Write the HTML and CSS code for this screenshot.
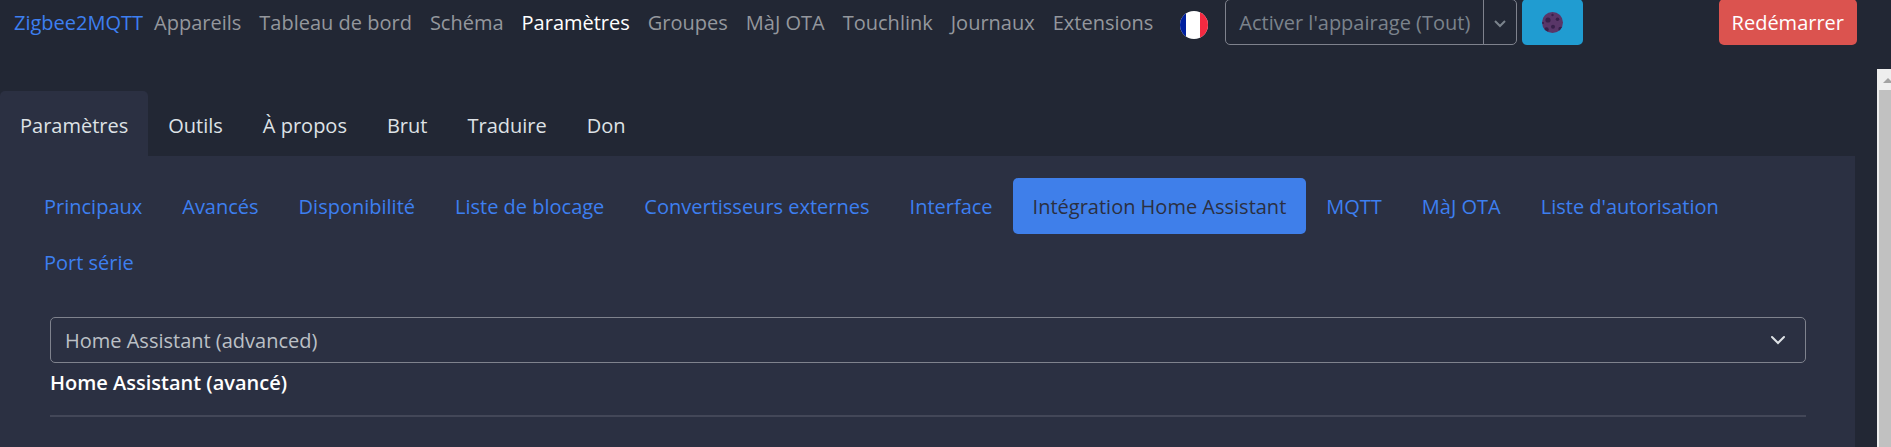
FILE: index.html
```html
<!DOCTYPE html>
<html lang="fr">
<head>
    <meta charset="UTF-8">
    <meta name="viewport" content="width=device-width, initial-scale=1.0">
    <title>Zigbee2MQTT</title>
    <link rel="stylesheet" href="styles.css">
</head>

<body>
    <!-- Barre de navigation -->
    <header class="navbar">
        <a class="brand" href="#">Zigbee2MQTT</a>
        <nav class="nav-links">
            <a href="#">Appareils</a>
            <a href="#">Tableau de bord</a>
            <a href="#">Schéma</a>
            <a class="active" href="#">Paramètres</a>
            <a href="#">Groupes</a>
            <a href="#">MàJ OTA</a>
            <a href="#">Touchlink</a>
            <a href="#">Journaux</a>
            <a href="#">Extensions</a>
        </nav>
        <button class="flag" type="button" aria-label="Langue">
            <svg width="28" height="28" viewBox="0 0 28 28">
                <clipPath id="rond"><circle cx="14" cy="14" r="14"/></clipPath>
                <g clip-path="url(#rond)">
                    <path fill="#fff" d="M0 0h28v28H0z"/>
                    <path fill="#00209f" d="M0 0h6v28H0z"/>
                    <path fill="#f42a41" d="M20 0h8v28h-8z"/>
                </g>
            </svg>
        </button>
        <div class="btn-group">
            <button class="btn-outline" type="button">Activer l'appairage (Tout)</button>
            <button class="btn-outline btn-split" type="button" aria-label="Choisir">
                <svg width="12" height="8" viewBox="0 0 12 8" fill="none" stroke="currentColor" stroke-width="2">
                    <path d="M1 1l5 5 5-5"/>
                </svg>
            </button>
        </div>
        <button class="btn btn-info" type="button" aria-label="Thème">
            <svg width="21" height="21" viewBox="0 0 21 21">
                <clipPath id="lune"><circle cx="10.5" cy="10.5" r="10.5"/></clipPath>
                <g clip-path="url(#lune)">
                    <path fill="#593668" d="M0 0h21v21H0z"/>
                    <g fill="#37204a">
                        <circle cx="6" cy="8" r="2.6"/>
                        <circle cx="15.5" cy="7.3" r="1.8"/>
                        <circle cx="10.5" cy="3" r="1.2"/>
                        <circle cx="11" cy="14.7" r="2"/>
                        <circle cx="4.5" cy="17.5" r="2.2"/>
                        <circle cx="18.5" cy="17" r="2.2"/>
                        <circle cx="1" cy="11" r="1"/>
                    </g>
                </g>
            </svg>
        </button>
        <button class="btn btn-danger" type="button">Redémarrer</button>
    </header>

    <div class="page">
        <main class="content">
            <!-- Onglets -->
            <nav class="tabs">
                <a class="active" href="#">Paramètres</a>
                <a href="#">Outils</a>
                <a href="#">À propos</a>
                <a href="#">Brut</a>
                <a href="#">Traduire</a>
                <a href="#">Don</a>
            </nav>

            <!-- Panneau des paramètres -->
            <section class="panel">
                <nav class="pills">
                    <a href="#">Principaux</a>
                    <a href="#">Avancés</a>
                    <a href="#">Disponibilité</a>
                    <a href="#">Liste de blocage</a>
                    <a href="#">Convertisseurs externes</a>
                    <a href="#">Interface</a>
                    <a class="active" href="#">Intégration Home Assistant</a>
                    <a href="#">MQTT</a>
                    <a href="#">MàJ OTA</a>
                    <a href="#">Liste d'autorisation</a>
                    <a href="#">Port série</a>
                </nav>
                <form class="settings">
                    <div class="select-wrap">
                        <select id="integration">
                            <option>Home Assistant (advanced)</option>
                        </select>
                        <svg class="chevron" width="16" height="11" viewBox="0 0 16 11" fill="none" stroke="#dee2e6" stroke-width="2" stroke-linecap="round">
                            <path d="M2 2l6 6 6-6"/>
                        </svg>
                    </div>
                    <label for="integration">Home Assistant (avancé)</label>
                    <hr>
                </form>
            </section>
        </main>

        <!-- Barre de défilement -->
        <div class="scrollbar">
            <svg class="scroll-up" width="14" height="21" viewBox="0 0 14 21">
                <path fill="#a3a3a3" d="M6 14l5-5 5 5z"/>
            </svg>
            <div class="scroll-thumb"></div>
        </div>
    </div>
</body>
</html>
```

FILE: styles.css
```css
/* General */
* {
    box-sizing: border-box;
}

body {
    margin: 0;
    min-height: 100vh;
    display: flex;
    flex-direction: column;
    overflow: hidden;
    background: #222734;
    color: #fff;
    font-family: "Segoe UI", "Open Sans", sans-serif;
    font-size: 20px;
    line-height: 33px;
}

a {
    color: #3d7ff0;
    text-decoration: none;
    white-space: nowrap;
}

button,
select {
    font: inherit;
    margin: 0;
    cursor: pointer;
}

svg {
    display: block;
}

/* Barre de navigation */
.navbar {
    display: flex;
    align-items: flex-start;
    height: 70px;
    margin-top: -1px;
    padding: 0 34px 0 14px;
}

.brand,
.nav-links a {
    padding: 7px 0;
}

.nav-links {
    display: flex;
    gap: 18px;
    margin-left: 11px;
}

.nav-links a {
    color: #94979d;
}

.nav-links a.active {
    color: #fff;
}

.flag {
    margin: 12px 17px 0 27px;
    padding: 0;
    border: 0;
    background: none;
}

.btn-group {
    display: flex;
    margin-right: 5px;
}

.btn-outline {
    height: 46px;
    padding: 0 13px;
    border: 1px solid #7f828d;
    border-radius: 5px 0 0 5px;
    background: none;
    color: #7b838c;
    white-space: nowrap;
}

.btn-split {
    margin-left: -1px;
    padding: 3px 10px 0;
    border-radius: 0 5px 5px 0;
}

.btn {
    height: 46px;
    padding: 0 13px;
    border: 0;
    border-radius: 5px;
    color: #fff;
}

.btn-info {
    padding: 0 20px;
    background: #209cd1;
}

.btn-danger {
    margin-left: auto;
    background: #db534f;
}

/* Contenu */
.page {
    flex: 1;
    display: flex;
}

.content {
    flex: 1;
    display: flex;
    flex-direction: column;
    padding: 22px 22px 0 0;
}

.tabs {
    display: flex;
}

.tabs a {
    padding: 18px 20px 14px;
    border-radius: 5px 5px 0 0;
    color: #dee2e6;
}

.tabs a.active {
    background: #2b3042;
}

.panel {
    flex: 1;
    padding: 22px 24px;
    background: #2b3042;
}

.pills {
    display: flex;
    flex-wrap: wrap;
}

.pills a {
    padding: 12px 20px 11px;
    border-radius: 5px;
}

.pills a.active {
    background: #3f7fea;
    color: #2b3042;
}

/* Formulaire */
.settings {
    padding: 27px 25px 0 26px;
}

.select-wrap {
    position: relative;
}

.select-wrap select {
    display: block;
    width: 100%;
    height: 46px;
    padding: 0 50px 0 14px;
    border: 1px solid #7f828d;
    border-radius: 5px;
    background: #2b3042;
    color: #bcc0c6;
    appearance: none;
}

.chevron {
    position: absolute;
    top: 18px;
    right: 20px;
    pointer-events: none;
}

.settings label {
    display: block;
    padding-top: 3px;
    font-weight: 600;
}

.settings hr {
    height: 2px;
    margin: 16px 0 0;
    border: 0;
    background: #434758;
}

/* Barre de défilement */
.scrollbar {
    display: flex;
    flex-direction: column;
    width: 14px;
    background: #eeeeee;
}

.scroll-thumb {
    flex: 1;
    margin-left: 2px;
    background: #c1c1c1;
}
```
